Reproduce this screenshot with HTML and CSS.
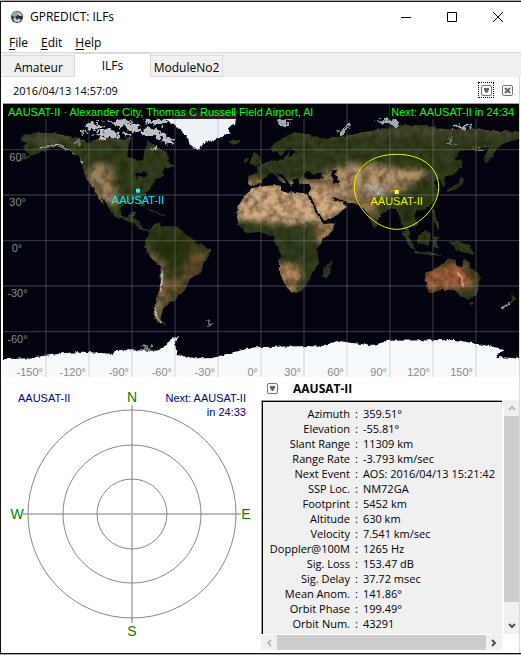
FILE: index.html
```html
<!DOCTYPE html>
<html lang="en">
<head>
    <meta charset="UTF-8">
    <meta name="viewport" content="width=device-width, initial-scale=1.0">
    <title>GPREDICT: ILFs</title>
    <link rel="stylesheet" href="styles.css">
</head>
<body>
    <div class="window">
        <header class="titlebar">
            <svg class="app-icon" viewBox="0 0 14 14" aria-hidden="true">
                <circle cx="7" cy="7" r="6" fill="#26343f"/>
                <path d="M2 4 L5 1 L9 2 L8 5 L5 7 L2 6Z" fill="#8aa6bd"/>
                <path d="M7 2 L11 3 L12 6 L9 6Z" fill="#d8c48a"/>
                <path d="M3 9 L5 7 L7 10 L9 8 L11 10 L9 12 L5 12Z" fill="#c3ccd2"/>
                <path d="M8 7 L11 7 L10 9Z" fill="#101820"/>
            </svg>
            <h1>GPREDICT: ILFs</h1>
            <div class="window-buttons">
                <button type="button" aria-label="Minimize"><svg viewBox="0 0 10 10"><path d="M0 5.5H10"/></svg></button>
                <button type="button" aria-label="Maximize"><svg viewBox="0 0 10 10"><path d="M.5 .5H9.5V9.5H.5Z"/></svg></button>
                <button type="button" aria-label="Close"><svg viewBox="0 0 10 10"><path d="M0 0L10 10M10 0L0 10"/></svg></button>
            </div>
        </header>

        <nav class="menubar">
            <a href="#file"><u>F</u>ile</a>
            <a href="#edit"><u>E</u>dit</a>
            <a href="#help"><u>H</u>elp</a>
        </nav>

        <div class="tabs">
            <button type="button" class="tab">Amateur</button>
            <button type="button" class="tab active">ILFs</button>
            <button type="button" class="tab">ModuleNo2</button>
        </div>

        <main class="module">
            <div class="module-bar">
                <span>2016/04/13 14:57:09</span>
                <div class="module-buttons">
                    <button type="button" class="icon-button focused" aria-label="Module options">
                        <svg viewBox="0 0 11 11"><rect x=".5" y=".5" width="10" height="10" rx="1.5"/><path class="solid" d="M3 3H8V5L6 8H5L3 5Z"/></svg>
                    </button>
                    <button type="button" class="icon-button" aria-label="Close module">
                        <svg viewBox="0 0 11 11"><rect x=".5" y=".5" width="10" height="10" rx="1.5"/><path class="cross" d="M3 3L8 8M8 3L3 8"/></svg>
                    </button>
                </div>
            </div>

            <!-- World map, 4.3 units per degree of longitude -->
            <svg class="map" viewBox="0 0 1548 819" role="img" aria-label="World map">
                <defs>
                    <filter id="coast" x="0" y="0" width="1548" height="819" filterUnits="userSpaceOnUse" color-interpolation-filters="sRGB">
                        <feTurbulence type="fractalNoise" baseFrequency=".06" numOctaves="3" seed="4" result="noise"/>
                        <feDisplacementMap in="SourceGraphic" in2="noise" scale="11" xChannelSelector="R" yChannelSelector="G" result="rough"/>
                        <feTurbulence type="fractalNoise" baseFrequency=".04" numOctaves="5" seed="9"/>
                        <feColorMatrix values="0 0 0 0 .1  0 0 0 0 .08  0 0 0 0 .02  1.1 0 0 0 -.4"/>
                        <feComposite in2="rough" operator="in" result="shade"/>
                        <feMerge><feMergeNode in="rough"/><feMergeNode in="shade"/></feMerge>
                    </filter>
                    <filter id="edge" x="0" y="0" width="1548" height="819" filterUnits="userSpaceOnUse" color-interpolation-filters="sRGB">
                        <feTurbulence type="fractalNoise" baseFrequency=".07" numOctaves="3" seed="2"/>
                        <feDisplacementMap in="SourceGraphic" scale="12" xChannelSelector="R" yChannelSelector="G"/>
                    </filter>
                    <filter id="islands" x="0" y="0" width="1548" height="819" filterUnits="userSpaceOnUse" color-interpolation-filters="sRGB">
                        <feTurbulence type="fractalNoise" baseFrequency=".07" numOctaves="3" seed="6"/>
                        <feDisplacementMap in="SourceGraphic" scale="36" xChannelSelector="R" yChannelSelector="G"/>
                    </filter>
                    <filter id="soft" x="-30%" y="-30%" width="160%" height="160%"><feGaussianBlur stdDeviation="9"/></filter>
                    <clipPath id="land">
                        <path d="M61 93L91 86 151 88 206 98 241 106 253 118 281 106 321 100 361 108 383 103 376 128 369 153 406 170 421 168 423 148 431 128 436 108 451 123 481 138 503 163 490 170 515 190 480 192 484 213 460 228 446 246 436 262 416 280 424 305 416 308 403 288 386 288 366 298 351 315 356 335 374 340 386 323 398 323 388 343 411 350 416 370 432 378 434 383 411 375 391 358 366 348 336 338 321 315 296 278 303 302 284 274 272 254 254 234 244 210 241 184 226 160 196 140 161 128 121 140 91 154 51 174 31 174 81 154 64 138 56 128 76 118 51 108Z"/>
                        <path d="M434 376L451 366 466 358 481 366 526 368 541 388 576 408 580 418 605 424 624 443 601 478 591 508 561 523 546 558 516 588 500 596 481 613 471 643 485 662 461 655 453 633 461 588 473 538 473 488 441 458 426 428 428 405 438 395Z"/>
                        <path d="M746 253L771 248 816 243 834 246 834 260 856 268 871 263 911 270 918 284 941 328 961 360 996 358 986 383 956 408 954 418 941 438 949 478 921 518 911 543 891 563 861 566 851 548 828 503 828 473 834 453 814 413 816 400 806 396 771 383 731 388 706 363 703 338 704 308 721 283Z"/>
                        <path d="M961 493L988 468 981 503 968 526 960 515Z"/>
                        <path d="M736 214L736 240 752 244 772 240 782 222 800 208 812 206 830 228 840 240 848 236 824 208 840 210 852 228 864 246 872 238 868 226 890 226 890 240 918 240 927 250 916 268 926 282 942 318 964 350 1005 332 1031 308 1015 292 996 294 984 276 1002 282 1022 290 1045 296 1066 300 1084 316 1100 342 1113 376 1123 360 1128 338 1161 313 1176 315 1190 335 1196 353 1202 372 1214 398 1224 395 1212 362 1228 372 1243 358 1233 336 1243 322 1273 312 1301 282 1305 258 1291 234 1312 226 1320 252 1328 238 1322 218 1350 212 1374 190 1378 172 1358 166 1370 140 1426 136 1460 130 1444 158 1446 178 1468 160 1480 136 1506 118 1548 104V84L1466 80 1406 74 1326 76 1256 62 1176 66 1090 84 1041 94 956 104 916 92 886 86 856 94 816 118 801 134 808 144 824 142 830 158 848 138 862 130 856 152 840 166 808 170 785 176 762 186 764 206Z"/>
                        <path d="M741 180L744 164 752 144 764 150 774 176 760 184ZM732 174L722 178 726 162 738 162Z"/>
                        <path d="M676 112L694 108 714 112 706 120 684 120Z"/>
                        <path d="M1331 258L1350 248 1366 238 1374 218 1382 226 1374 246 1350 256 1336 266Z"/>
                        <path d="M1191 373L1206 384 1228 416 1236 438 1216 424ZM1234 440L1310 450 1316 456 1234 448ZM1242 398L1268 378 1284 388 1276 424 1246 418ZM1290 398L1312 398 1300 412 1308 430 1292 430ZM1286 316L1296 318 1298 340 1312 366 1304 376 1290 344ZM1334 410L1352 414 1366 412 1396 424 1416 452 1392 448 1366 440Z"/>
                        <path d="M1266 508L1301 493 1320 478 1336 464 1358 468 1358 483 1376 490 1386 461 1401 483 1431 518 1431 543 1421 573 1396 588 1371 573 1351 558 1316 558 1276 568 1269 543ZM1398 596L1412 596 1406 608ZM1522 568L1542 586 1524 600 1498 618 1492 614 1526 590ZM428 312L470 326 492 332 484 336 444 322Z"/>
                    </clipPath>
                </defs>

                <rect width="1548" height="819" fill="#02030f"/>
                <g filter="url(#coast)">
                    <g clip-path="url(#land)">
                        <rect width="1548" height="819" fill="#303f1c"/>
                        <g filter="url(#soft)">
                            <path fill="#47492f" d="M40 80H520V118H220L110 126ZM820 70L1548 60V96L1120 98 960 96Z"/>
                            <path fill="#9b7f5b" d="M254 188L300 174 330 196 340 260 340 312 290 290 256 240Z"/>
                            <path fill="#25350f" d="M430 390H550L580 440 540 490 480 470Z"/>
                            <path fill="#66532f" d="M570 430L624 440 590 500 510 590 480 620 484 530 540 510Z"/>
                            <path fill="#9c7c55" d="M424 430L440 440 484 490 482 540 474 650 448 640 470 520Z"/>
                            <path fill="#d2ab80" d="M690 236H920L976 360H860L690 348ZM900 226L1040 250 1060 300 960 360Z"/>
                            <path fill="#ae845a" d="M960 350H1000V390L950 420 930 400ZM816 470L870 480 900 500 880 560 840 570Z"/>
                            <path fill="#b3946c" d="M960 204L1060 176 1180 190 1280 200 1250 226 1200 256 1090 290 980 290Z"/>
                            <path fill="#8f7350" d="M1050 240L1120 280 1128 340 1090 336 1046 290ZM880 224H1000V250H880ZM730 220L780 230 760 246 730 240Z"/>
                            <path fill="#a5633b" d="M1262 508L1336 474 1390 490 1416 550 1350 560 1266 560Z"/>
                            <path fill="#c9bfae" d="M1084 240L1112 240 1156 270 1140 276 1100 260Z"/>
                            <path fill="#2c3b18" d="M1190 260L1300 240V300L1240 370H1190Z"/>
                        </g>
                        <path fill="none" stroke="#d0d2d2" stroke-width="4" d="M110 132L160 122 196 138 240 176M480 500L473 560M458 610L462 640 476 658M1084 240L1106 250 1130 276M800 130L826 104M1494 616L1520 598"/>
                        <path fill="none" stroke="#d3a07c" stroke-width="7" d="M1364 508L1376 524 1380 550"/>
                    </g>
                </g>
                <!-- inland seas and lakes -->
                <g fill="#02030f" filter="url(#edge)">
                    <path d="M900 218L912 202 930 210 950 206 960 220 926 226 904 226ZM988 200L1002 196 998 212 1008 236 996 238 984 216ZM396 208L420 204 434 214 424 222 404 214 402 232ZM874 138L866 156 856 160 862 138Z"/>
                </g>
                <!-- ice and snow -->
                <g fill="#eef2f6" filter="url(#edge)">
                    <path d="M484 46L560 22 706 20 696 60 676 72 684 88 650 102 620 112 600 118 592 136 575 134 560 118 552 98 530 78 516 62Z"/>
                    <path fill="#f6fafd" d="M-20 766L71 763 181 748 241 743 331 750 336 738 461 740 491 723 506 703 530 696 516 712 521 753 576 763 626 763 696 743 756 730 916 726 946 728 1006 710 1041 716 1076 720 1101 726 1156 710 1356 708 1426 720 1506 736 1476 758 1568 765V839H-20Z"/>
                </g>
                <g fill="#b9c0c3" filter="url(#islands)">
                    <path d="M244 62L278 54 306 62 290 78 256 76ZM270 90L310 76 350 86 344 104 300 100ZM306 50L372 46 402 58 350 70ZM368 66L412 66 408 84 372 80ZM414 46L496 44 480 66 430 60ZM402 76L446 72 482 88 510 112 506 124 474 108 460 94 424 92ZM444 130L458 128 456 140ZM236 80L256 84 250 94ZM352 88L384 90 376 100Z"/>
                    <path fill="#9eabb0" d="M814 48L850 44 868 52 842 64 820 58ZM1004 86L1036 64 1048 64 1020 88ZM1112 50L1160 46 1196 58 1180 66 1150 60ZM1350 66L1390 62 1410 68 1370 74Z"/>
                    <path fill="#777f72" d="M206 118L228 110 234 124ZM440 744L420 722 450 730ZM614 654L628 658 620 664ZM1338 100L1352 122 1342 122ZM1410 132L1444 128 1430 140Z"/>
                </g>

                <g class="grid">
                    <path d="M129 0V819M258 0V819M387 0V819M516 0V819M645 0V819M774 0V819M903 0V819M1032 0V819M1161 0V819M1290 0V819M1419 0V819"/>
                    <path d="M0 137H1548M0 273H1548M0 410H1548M0 546H1548M0 683H1548"/>
                </g>
                <g class="degrees">
                    <text x="19" y="170">60°</text>
                    <text x="19" y="306">30°</text>
                    <text x="26" y="443">0°</text>
                    <text x="13" y="579">-30°</text>
                    <text x="13" y="716">-60°</text>
                </g>
                <g class="degrees lon">
                    <text x="120" y="816">-150°</text>
                    <text x="249" y="816">-120°</text>
                    <text x="378" y="816">-90°</text>
                    <text x="507" y="816">-60°</text>
                    <text x="636" y="816">-30°</text>
                    <text x="765" y="816">0°</text>
                    <text x="894" y="816">30°</text>
                    <text x="1023" y="816">60°</text>
                    <text x="1152" y="816">90°</text>
                    <text x="1281" y="816">120°</text>
                    <text x="1410" y="816">150°</text>
                </g>

                <path class="footprint" d="M1181 151C1262 151 1307 194 1307 250C1307 312 1240 376 1181 376C1122 376 1054 312 1054 250C1054 194 1100 151 1181 151Z"/>
                <rect x="1175" y="258" width="12" height="12" fill="#ff0"/>
                <text class="sat" x="1181" y="303">AAUSAT-II</text>
                <rect x="399" y="254" width="12" height="12" fill="#0ff"/>
                <text class="sat station" x="405" y="300">AAUSAT-II</text>

                <rect class="caption-bg" width="924" height="45"/>
                <rect class="caption-bg" x="1161" width="387" height="45"/>
                <text class="caption" x="15" y="36">AAUSAT-II · Alexander City, Thomas C Russell Field Airport, Al</text>
                <text class="caption next" x="1533" y="36">Next: AAUSAT-II in 24:34</text>
            </svg>

            <div class="panels">
                <svg class="polar" viewBox="0 0 258 276" role="img" aria-label="Polar view">
                    <g class="axes"><path d="M129 28V246M20 137H238"/></g>
                    <g class="rings">
                        <circle cx="129" cy="137" r="104"/>
                        <circle cx="129" cy="137" r="69"/>
                        <circle cx="129" cy="137" r="35"/>
                    </g>
                    <g class="compass">
                        <text x="129" y="25">N</text>
                        <text x="129" y="259">S</text>
                        <text x="14" y="142">W</text>
                        <text x="243" y="142">E</text>
                    </g>
                    <text class="note" x="15" y="25">AAUSAT-II</text>
                    <text class="note end" x="243" y="25">Next: AAUSAT-II</text>
                    <text class="note end" x="243" y="39">in 24:33</text>
                </svg>

                <section class="single-sat">
                    <div class="sat-header">
                        <button type="button" class="icon-button" aria-label="Satellite options">
                            <svg viewBox="0 0 11 11"><rect x=".5" y=".5" width="10" height="10" rx="1.5"/><path class="solid" d="M3 3H8V5L6 8H5L3 5Z"/></svg>
                        </button>
                        <h2>AAUSAT-II</h2>
                    </div>
                    <div class="sat-data">
                        <table>
                            <tr><th scope="row">Azimuth</th><td>:</td><td>359.51°</td></tr>
                            <tr><th scope="row">Elevation</th><td>:</td><td>-55.81°</td></tr>
                            <tr><th scope="row">Slant Range</th><td>:</td><td>11309 km</td></tr>
                            <tr><th scope="row">Range Rate</th><td>:</td><td>-3.793 km/sec</td></tr>
                            <tr><th scope="row">Next Event</th><td>:</td><td>AOS: 2016/04/13 15:21:42</td></tr>
                            <tr><th scope="row">SSP Loc.</th><td>:</td><td>NM72GA</td></tr>
                            <tr><th scope="row">Footprint</th><td>:</td><td>5452 km</td></tr>
                            <tr><th scope="row">Altitude</th><td>:</td><td>630 km</td></tr>
                            <tr><th scope="row">Velocity</th><td>:</td><td>7.541 km/sec</td></tr>
                            <tr><th scope="row">Doppler@100M</th><td>:</td><td>1265 Hz</td></tr>
                            <tr><th scope="row">Sig. Loss</th><td>:</td><td>153.47 dB</td></tr>
                            <tr><th scope="row">Sig. Delay</th><td>:</td><td>37.72 msec</td></tr>
                            <tr><th scope="row">Mean Anom.</th><td>:</td><td>141.86°</td></tr>
                            <tr><th scope="row">Orbit Phase</th><td>:</td><td>199.49°</td></tr>
                            <tr><th scope="row">Orbit Num.</th><td>:</td><td>43291</td></tr>
                        </table>
                    </div>
                    <div class="scroll vertical">
                        <button type="button" aria-label="Scroll up" disabled><svg viewBox="0 0 8 8"><path d="M1 6L4 3L7 6"/></svg></button>
                        <div class="thumb"></div>
                        <button type="button" aria-label="Scroll down"><svg viewBox="0 0 8 8"><path d="M1 2L4 5L7 2"/></svg></button>
                    </div>
                    <div class="scroll horizontal">
                        <button type="button" aria-label="Scroll left" disabled><svg viewBox="0 0 8 8"><path d="M6 1L3 4L6 7"/></svg></button>
                        <div class="thumb"></div>
                        <button type="button" aria-label="Scroll right"><svg viewBox="0 0 8 8"><path d="M2 1L5 4L2 7"/></svg></button>
                    </div>
                </section>
            </div>
        </main>
    </div>
</body>
</html>
```
FILE: styles.css
```css
* {
    box-sizing: border-box;
}
body {
    margin: 0;
    padding: 1px 0;
    background-color: #a9adb0;
    font-family: "Open Sans", "Noto Sans", sans-serif;
    font-size: 11px;
    color: #000;
}
button {
    padding: 0;
    border: none;
    background: none;
    font: inherit;
    color: inherit;
}
svg {
    display: block;
}
.window {
    border: 1px solid #111;
    border-right: none;
    background-color: #fff;
}

/* Title bar and menu */
.titlebar {
    display: flex;
    align-items: center;
    height: 29px;
    padding-left: 9px;
}
.app-icon {
    width: 14px;
    height: 14px;
}
h1 {
    margin: 0 0 0 6px;
    font-size: 12px;
    font-weight: normal;
}
.window-buttons {
    display: flex;
    margin-left: auto;
}
.window-buttons button {
    display: flex;
    align-items: center;
    justify-content: center;
    width: 46px;
    height: 28px;
}
.window-buttons svg {
    width: 10px;
    height: 10px;
    fill: none;
    stroke: #000;
}
.menubar {
    display: flex;
    gap: 13px;
    height: 21px;
    padding-left: 8px;
    line-height: 23px;
    font-size: 12px;
}
.menubar a {
    color: #000;
    text-decoration: none;
}
.menubar u {
    text-underline-offset: 2px;
}

/* Tabs */
.tabs {
    display: flex;
    align-items: flex-end;
    height: 25px;
    padding-left: 2px;
    border-top: 1px solid #d9d9d9;
    background-color: #f0f0f0;
}
.tab {
    width: 72px;
    height: 22px;
    padding-top: 2px;
    border: 1px solid #d9d9d9;
    border-left: none;
    font-size: 12px;
}
.tab.active {
    width: 76px;
    height: 24px;
    padding-top: 0;
    border-bottom: none;
    background-color: #fff;
}

/* Module */
.module {
    margin-right: 1px;
    padding-left: 2px;
    border-right: 1px solid #d9d9d9;
}
.module-bar {
    display: flex;
    align-items: center;
    justify-content: space-between;
    height: 27px;
    padding: 0 4px 0 10px;
    border-bottom: 1px solid #a0a0a0;
}
.module-buttons {
    display: flex;
    gap: 5px;
}
.icon-button {
    display: flex;
    align-items: center;
    justify-content: center;
    width: 16px;
    height: 16px;
}
.icon-button.focused {
    border: 1px dotted #000;
}
.icon-button svg {
    flex: none;
    width: 11px;
    height: 11px;
    fill: none;
    stroke: #777;
}
.icon-button .solid {
    fill: #666;
    stroke: none;
}
.icon-button .cross {
    stroke: #666;
    stroke-width: 2;
}

/* Map */
.map {
    width: 100%;
    height: auto;
    font-family: "Liberation Sans", Arial, sans-serif;
    font-size: 33px;
}
.grid path {
    fill: none;
    stroke: #999;
    stroke-opacity: 0.3;
    stroke-width: 4;
}
.degrees {
    fill: #888;
}
.lon,
.next {
    text-anchor: end;
}
.footprint {
    fill: none;
    stroke: #ee0;
    stroke-width: 3;
}
.sat {
    fill: #ee0;
    text-anchor: middle;
}
.station {
    fill: #0ef;
}
.caption-bg {
    fill: #000;
    fill-opacity: 0.85;
}
.caption {
    fill: #0f0;
}

/* Lower panels */
.panels {
    display: grid;
    grid-template-columns: 1fr 1fr;
}
.polar {
    width: 100%;
    height: auto;
    font-family: "Liberation Sans", Arial, sans-serif;
    font-size: 11px;
}
.axes path {
    stroke: #bbb;
    stroke-width: 2;
}
.rings circle {
    fill: none;
    stroke: #888;
}
.compass {
    fill: #008000;
    font-size: 14px;
    text-anchor: middle;
}
.note {
    fill: #000080;
}
.note.end {
    text-anchor: end;
}
.single-sat {
    display: grid;
    grid-template-columns: 1fr 15px;
    grid-template-rows: 22px 1fr 15px;
    gap: 2px;
    row-gap: 1px;
    padding-bottom: 3px;
}
.sat-header {
    display: flex;
    align-items: center;
    grid-column: 1 / 3;
    gap: 13px;
    padding-left: 3px;
}
h2 {
    margin: 0;
    font-size: 12px;
}
.sat-data {
    overflow: hidden;
    padding-top: 5px;
    border-top: 1px solid #a0a0a0;
    border-left: 1px solid #a0a0a0;
    background-color: #f0f0f0;
    box-shadow: inset 1px 1px #000;
}
table {
    border-spacing: 0;
    white-space: nowrap;
}
th,
td {
    padding: 0;
    line-height: 15px;
    font-weight: normal;
}
th {
    width: 88px;
    text-align: right;
}
td {
    padding-left: 5px;
}

/* Scrollbars */
.scroll {
    display: flex;
    background-color: #f0f0f0;
}
.vertical {
    flex-direction: column;
}
.vertical button {
    width: 15px;
    height: 16px;
}
.horizontal button {
    width: 16px;
    height: 15px;
}
.scroll button {
    display: flex;
    align-items: center;
    justify-content: center;
    flex: none;
}
.scroll svg {
    width: 8px;
    height: 8px;
    fill: none;
    stroke: #505050;
    stroke-width: 2;
}
.scroll button:disabled svg {
    stroke: #bbb;
}
.thumb {
    flex: 1;
    background-color: #cdcdcd;
}
.vertical .thumb {
    margin-bottom: 16px;
}
```
